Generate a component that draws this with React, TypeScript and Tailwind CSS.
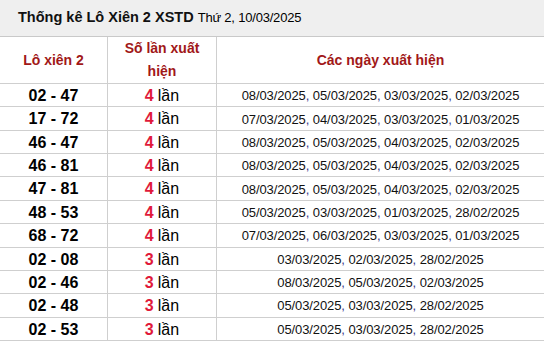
import React from 'react';

interface Row {
  pair: string;
  count: number;
  dates: string[];
}

const rows: Row[] = [
  { pair: '02 - 47', count: 4, dates: ['08/03/2025', '05/03/2025', '03/03/2025', '02/03/2025'] },
  { pair: '17 - 72', count: 4, dates: ['07/03/2025', '04/03/2025', '03/03/2025', '01/03/2025'] },
  { pair: '46 - 47', count: 4, dates: ['08/03/2025', '05/03/2025', '04/03/2025', '02/03/2025'] },
  { pair: '46 - 81', count: 4, dates: ['08/03/2025', '05/03/2025', '04/03/2025', '02/03/2025'] },
  { pair: '47 - 81', count: 4, dates: ['08/03/2025', '05/03/2025', '04/03/2025', '02/03/2025'] },
  { pair: '48 - 53', count: 4, dates: ['05/03/2025', '03/03/2025', '01/03/2025', '28/02/2025'] },
  { pair: '68 - 72', count: 4, dates: ['07/03/2025', '06/03/2025', '03/03/2025', '01/03/2025'] },
  { pair: '02 - 08', count: 3, dates: ['03/03/2025', '02/03/2025', '28/02/2025'] },
  { pair: '02 - 46', count: 3, dates: ['08/03/2025', '05/03/2025', '02/03/2025'] },
  { pair: '02 - 48', count: 3, dates: ['05/03/2025', '03/03/2025', '28/02/2025'] },
  { pair: '02 - 53', count: 3, dates: ['05/03/2025', '03/03/2025', '28/02/2025'] },
];

const cols = 'grid grid-cols-[108px_109px_1fr]';

export default function App() {
  return (
    <div className="w-[544px] h-[341px] overflow-hidden bg-white font-['Liberation_Sans',Arial,sans-serif] text-black">
      {/* title */}
      <div className="h-[37px] flex items-center pl-[18px] bg-[#efefef] border-b border-[#c9c9c9] whitespace-nowrap">
        <span className="text-[14.5px] font-bold text-[#111]">Thống kê Lô Xiên 2 XSTD</span>
        <span className="ml-[4px] text-[13px] tracking-[-0.2px] text-[#000]">Thứ 2, 10/03/2025</span>
      </div>

      {/* header */}
      <div className={`${cols} h-[47px] border-b border-[#cfcfcf] text-[14px] font-bold text-[#a11818]`}>
        <div className="flex items-center justify-center border-r border-[#cfcfcf]">Lô xiên 2</div>
        <div className="flex flex-col items-center justify-center border-r border-[#cfcfcf] leading-[23px] text-center">
          <span>Số lần xuất</span>
          <span>hiện</span>
        </div>
        <div className="flex items-center justify-center">Các ngày xuất hiện</div>
      </div>

      {rows.map((r, i) => (
        <div key={i} className={`${cols} h-[23.36px] border-b border-[#cfcfcf]`}>
          <div className="flex items-center justify-center border-r border-[#cfcfcf] text-[16px] font-bold">
            {r.pair}
          </div>
          <div className="flex items-center justify-center border-r border-[#cfcfcf] text-[16px]">
            <span className="font-bold text-[#e0193a]">{r.count}</span>
            <span className="ml-[4px]">lần</span>
          </div>
          <div className="flex items-center justify-center text-[13px] tracking-[-0.1px] text-[#111] whitespace-nowrap">
            {r.dates.map((d, j) => (
              <React.Fragment key={j}>
                {j > 0 && <span className="text-[#3a3a8c] mr-[3.6px]">,</span>}
                <span>{d}</span>
              </React.Fragment>
            ))}
          </div>
        </div>
      ))}
    </div>
  );
}
